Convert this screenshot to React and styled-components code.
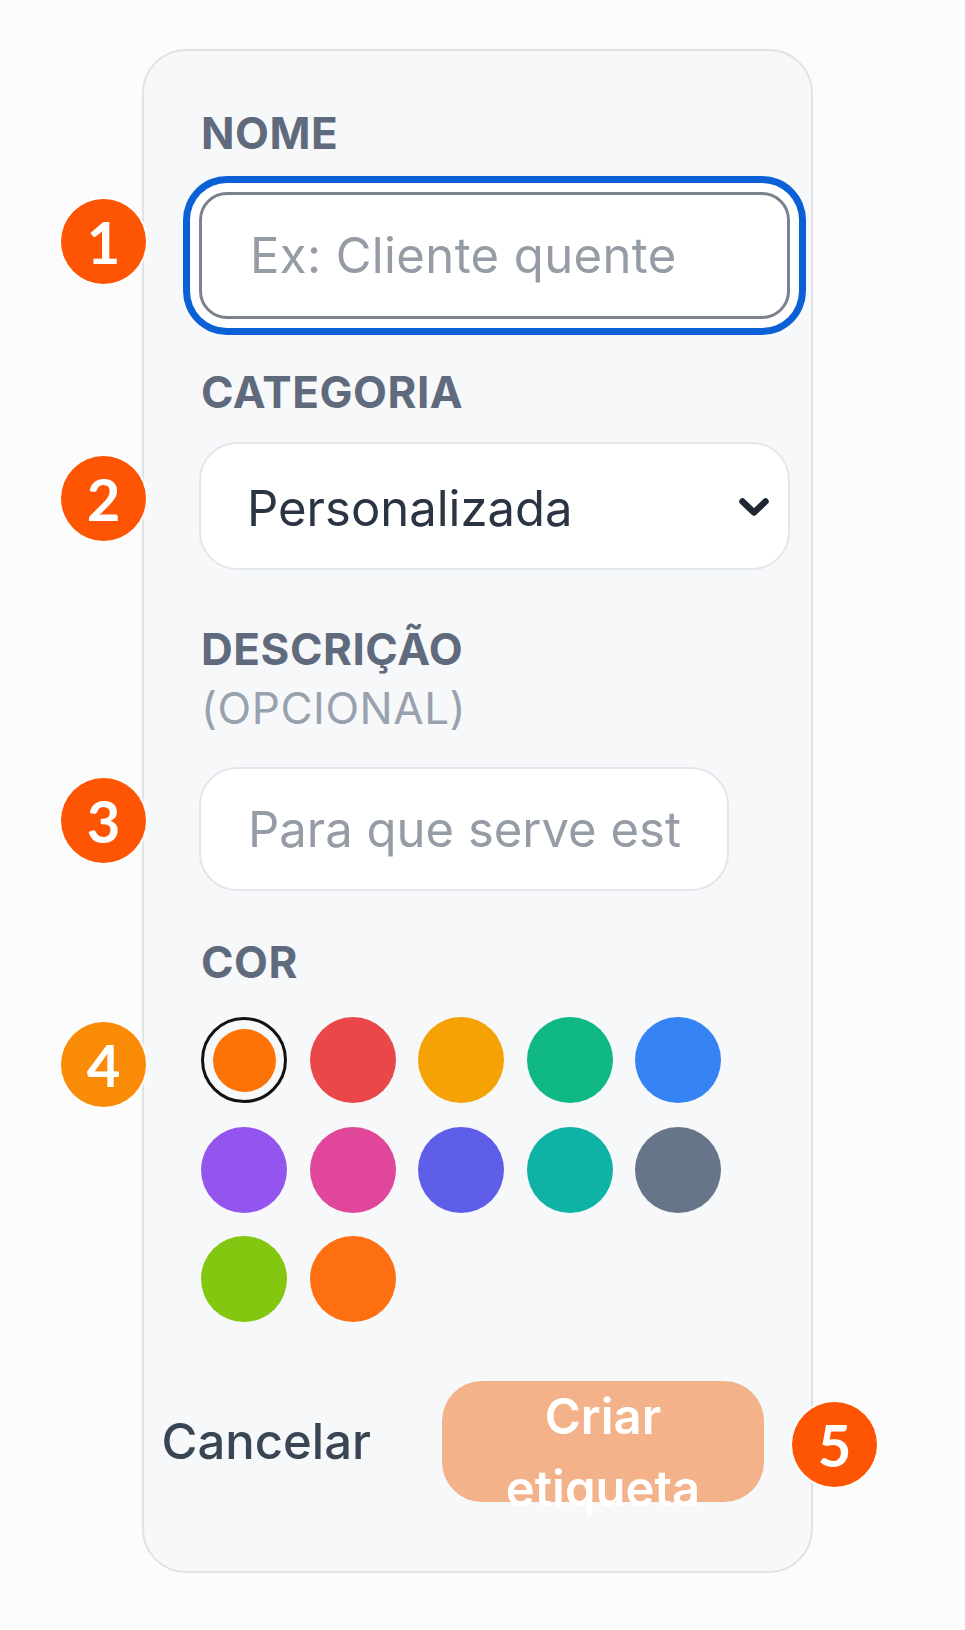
import React from 'react';
import styled, { createGlobalStyle, css } from 'styled-components';

const GlobalStyle = createGlobalStyle`
  html, body { margin: 0; padding: 0; background: #fcfcfc; }
  body { font-family: Inter, "Noto Sans", sans-serif; -webkit-font-smoothing: antialiased; }
  *, *::before, *::after { box-sizing: border-box; }
`;

const Page = styled.div`
  min-height: 1630px;
  padding: 49px 0 0 142px;
`;

const Card = styled.form`
  width: 671px;
  border: 2px solid #e0e2e6;
  border-radius: 44px;
  background: #f7f8fa;
  padding: 53px 21px 69px 55px;
  display: flex;
  flex-direction: column;
`;

const Field = styled.div`
  display: flex;
  flex-direction: column;
  margin-top: ${(p) => p.$mt || 0}px;
`;

const Label = styled.label`
  display: block;
  font: 700 44px/59px Inter, sans-serif;
  color: #5f6b7c;
  letter-spacing: 0.012em;
  text-transform: uppercase;
  padding-left: 2px;
  margin-bottom: ${(p) => p.$gap}px;
`;

const Optional = styled.span`
  display: block;
  font-weight: 400;
  color: #98a2af;
`;

const Control = styled.div`
  position: relative;
  width: ${(p) => (p.$w ? `${p.$w}px` : '100%')};
`;

const TextInput = styled.input`
  display: block;
  width: 100%;
  height: ${(p) => p.$h}px;
  background: #fff;
  font: 400 49px Inter, sans-serif;
  color: #2b3442;
  outline: none;
  ${(p) =>
    p.$focused
      ? css`
          border: 3px solid #7b828d;
          border-radius: 28px;
          padding: 0 47px 0 48px;
          letter-spacing: 0.008em;
          box-shadow: 0 0 0 9px #fff, 0 0 0 16px #0b60d6;
        `
      : css`
          border: 2px solid #e3e6ea;
          border-radius: 38px;
          padding: 0 47px;
        `}
  &::placeholder {
    color: #959ca6;
    opacity: 1;
  }
`;

const SelectBox = styled.button`
  display: flex;
  align-items: center;
  justify-content: space-between;
  width: 100%;
  height: 128px;
  border: 2px solid #e3e6ea;
  border-radius: 38px;
  background: #fff;
  padding: 4px 18px 0 46px;
  font: 400 49px Inter, sans-serif;
  color: #2b3442;
  cursor: pointer;
  text-align: left;
`;

const Chevron = styled.svg`
  width: 32px;
  height: 20px;
  flex-shrink: 0;
  margin-top: -2px;
`;

const Swatches = styled.div`
  position: relative;
  display: grid;
  grid-template-columns: repeat(5, 86px);
  column-gap: 22.5px;
  row-gap: 23.5px;
  padding-left: 2px;
`;

const Swatch = styled.button`
  width: 86px;
  height: 86px;
  border-radius: 50%;
  padding: 0;
  border: none;
  background: ${(p) => p.$color};
  cursor: pointer;
  ${(p) =>
    p.$selected &&
    css`
      border: 3px solid #121212;
      padding: 8.5px;
      background-clip: content-box;
    `}
`;

const Footer = styled.div`
  position: relative;
  display: flex;
  justify-content: flex-end;
  align-items: center;
  gap: 71px;
  height: 121px;
  margin-top: 59px;
  padding-right: 26px;
`;

const GhostButton = styled.button`
  flex-shrink: 0;
  background: none;
  border: none;
  padding: 0;
  font: 500 49px Inter, sans-serif;
  color: #3a4554;
  cursor: pointer;
`;

const PrimaryButton = styled.button`
  flex-shrink: 0;
  width: 322px;
  height: 121px;
  border: none;
  border-radius: 40px;
  background: #f4b28a;
  color: #fff;
  font: 600 49px/72px Inter, sans-serif;
  padding: 0 30px;
  display: flex;
  align-items: flex-start;
  justify-content: center;
  text-align: center;
  overflow: visible;
`;

const ButtonText = styled.span`
  display: block;
`;

const Badge = styled.span`
  position: absolute;
  top: ${(p) => p.$top}px;
  ${(p) => (p.$right != null ? css`right: ${p.$right}px;` : css`left: -138px;`)}
  width: 85px;
  height: 85px;
  border-radius: 50%;
  background: ${(p) => p.$color || '#fd5503'};
  color: #fff;
  font: 700 58px/1 Lato, "Noto Sans", sans-serif;
  display: flex;
  align-items: center;
  justify-content: center;
  box-shadow: 0 0 0 2px rgba(255, 255, 255, 0.85);
  pointer-events: none;
`;

const colors = [
  '#fd7305', '#e9474a', '#f4a206', '#10b886', '#3683f4',
  '#9355ee', '#e0469a', '#5e5ee8', '#0fb3a6', '#667589',
  '#84c710', '#fd6f10',
];

export default function App() {
  return (
    <>
      <GlobalStyle />
      <Page>
        <Card onSubmit={(e) => e.preventDefault()}>
          <Field>
            <Label $gap={29}>Nome</Label>
            <Control>
              <TextInput $focused $h={127} placeholder="Ex: Cliente quente" />
              <Badge $top={7}>1</Badge>
            </Control>
          </Field>

          <Field $mt={44}>
            <Label $gap={20}>Categoria</Label>
            <Control>
              <SelectBox type="button">
                <span>Personalizada</span>
                <Chevron viewBox="0 0 32 20" fill="none">
                  <polyline
                    points="4.5,4.5 16,15.5 27.5,4.5"
                    stroke="#1f2733"
                    strokeWidth="6.5"
                    strokeLinecap="round"
                    strokeLinejoin="round"
                  />
                </Chevron>
              </SelectBox>
              <Badge $top={14}>2</Badge>
            </Control>
          </Field>

          <Field $mt={50}>
            <Label $gap={29}>
              Descrição
              <Optional>(opcional)</Optional>
            </Label>
            <Control $w={530}>
              <TextInput $h={124} placeholder="Para que serve esta etiqueta?" />
              <Badge $top={11}>3</Badge>
            </Control>
          </Field>

          <Field $mt={42}>
            <Label $gap={25}>Cor</Label>
            <Swatches>
              {colors.map((c, i) => (
                <Swatch key={i} type="button" $color={c} $selected={i === 0} aria-label={c} />
              ))}
              <Badge $top={5} $color="#f98b06">4</Badge>
            </Swatches>
          </Field>

          <Footer>
            <GhostButton type="button">Cancelar</GhostButton>
            <PrimaryButton type="submit" disabled>
              <ButtonText>Criar etiqueta</ButtonText>
            </PrimaryButton>
            <Badge $top={21} $right={-87}>5</Badge>
          </Footer>
        </Card>
      </Page>
    </>
  );
}
